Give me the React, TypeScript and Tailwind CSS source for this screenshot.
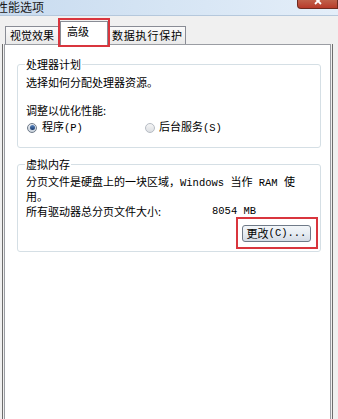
import React from "react";

const mono = "font-['Liberation_Mono',monospace] text-[10.5px]";

function Radio({ checked }: { checked: boolean }) {
  return (
    <span
      className={
        "w-[10px] h-[10px] rounded-full border flex items-center justify-center shrink-0 " +
        (checked
          ? "border-[#6f7b8a] bg-linear-to-b from-[#e9edf2] to-[#c9d2dc]"
          : "border-[#b6bcc4] bg-linear-to-b from-[#f5f5f5] to-[#dcdfe3]")
      }
    >
      {checked && (
        <span className="w-[5px] h-[5px] rounded-full bg-linear-to-b from-[#5b86c0] to-[#173a6e]" />
      )}
    </span>
  );
}

export default function App() {
  return (
    <div className="w-[338px] h-[419px] overflow-hidden bg-[#f0f0f0] flex flex-col font-['Noto_Sans_CJK_SC','Liberation_Sans',sans-serif] text-[11px] text-black">
      {/* title bar */}
      <div className="h-[16px] shrink-0 flex items-start justify-between bg-linear-to-r from-[#c8dbef] via-[#d6e5f4] to-[#e4eef9] border-b border-[#b5c8dc]">
        <span className="-ml-[4px] text-[12px] leading-[13px] text-[#1a1a1a]">性能选项</span>
        <div className="w-[41px] h-[9px] rounded-bl-[4px] border border-t-0 border-[#6e2a1f] bg-linear-to-b from-[#c0604a] to-[#b8392a] flex justify-center overflow-hidden">
          <svg width="10" height="9" viewBox="0 0 10 9">
            <path d="M2 -2 L8 4 M8 -2 L2 4" stroke="#fff" strokeWidth="1.8" />
          </svg>
        </div>
      </div>

      {/* tabs */}
      <div className="mt-[5px] h-[23px] shrink-0 flex items-end pl-[5px] relative z-10">
        <div className="h-[18px] w-[55px] border border-b-0 border-[#898c95] bg-linear-to-b from-[#fafafa] to-[#e9e9e9] pl-[4px] leading-[17px]">
          视觉效果
        </div>
        <div className="relative h-[24px] w-[48px] -mb-[1px] border border-b-0 border-[#898c95] bg-white pl-[6px] leading-[18px]">
          高级
          <span className="absolute -left-[3px] -right-[3px] -top-[4px] -bottom-[2px] border-2 border-[#d9353d]" />
        </div>
        <div className="h-[18px] w-[78px] border border-b-0 border-l-0 border-[#898c95] bg-linear-to-b from-[#fafafa] to-[#e9e9e9] pl-[4px] leading-[17px] tracking-[0.8px]">
          数据执行保护
        </div>
      </div>

      {/* panel */}
      <div className="ml-[2px] w-[331px] flex-1 border-x border-[#6d6d6d] px-[1px] flex flex-col">
        <div className="flex-1 border border-b-0 border-[#9a9da3] bg-white pl-[12px] pr-[9px] pt-[13px] flex flex-col">
          {/* group 1 */}
          <fieldset className="border border-[#d5dfe5] rounded-[3px] pl-[8px] pb-[13px]">
            <legend className="-ml-[1px] px-[1px] leading-[12px]">处理器计划</legend>
            <div className="mt-[6px] leading-[13px]">选择如何分配处理器资源。</div>
            <div className="mt-[15px] leading-[13px]">调整以优化性能:</div>
            <div className="mt-[4px] flex items-center h-[13px] leading-[13px]">
              <div className="w-[118px] flex items-center gap-[5px] ml-[1px]">
                <Radio checked />
                <span>
                  程序<span className={mono}>(P)</span>
                </span>
              </div>
              <div className="flex items-center gap-[4px]">
                <Radio checked={false} />
                <span>
                  后台服务<span className={mono}>(S)</span>
                </span>
              </div>
            </div>
          </fieldset>

          {/* group 2 */}
          <fieldset className="mt-[10px] border border-[#d5dfe5] rounded-[3px] pl-[8px] pr-[2px] pb-[2px] flex flex-col">
            <legend className="-ml-[1px] px-[1px] leading-[12px]">虚拟内存</legend>
            <div className="mt-[5px] leading-[13px]">
              分页文件是硬盘上的一块区域，<span className={mono + " text-[9px]"}>Windows </span>当作
              <span className={mono + " text-[9.5px]"}> RAM </span>使
              <br />
              用。
            </div>
            <div className="mt-[2px] flex leading-[12px]">
              <span className="w-[186px]">所有驱动器总分页文件大小:</span>
              <span className={mono}>8054 MB</span>
            </div>
            <div className="self-end border-2 border-[#d9353d] pt-[6px] pb-[5px] pl-[4px] pr-[5px]">
              <div className="w-[69px] h-[17px] rounded-[3px] border border-[#6f7a88] bg-linear-to-b from-[#f3f6f9] via-[#e6ecf2] to-[#d3dbe5] flex items-center justify-center leading-[15px]">
                更改<span className={mono}>(C)...</span>
              </div>
            </div>
          </fieldset>
        </div>
      </div>
    </div>
  );
}
